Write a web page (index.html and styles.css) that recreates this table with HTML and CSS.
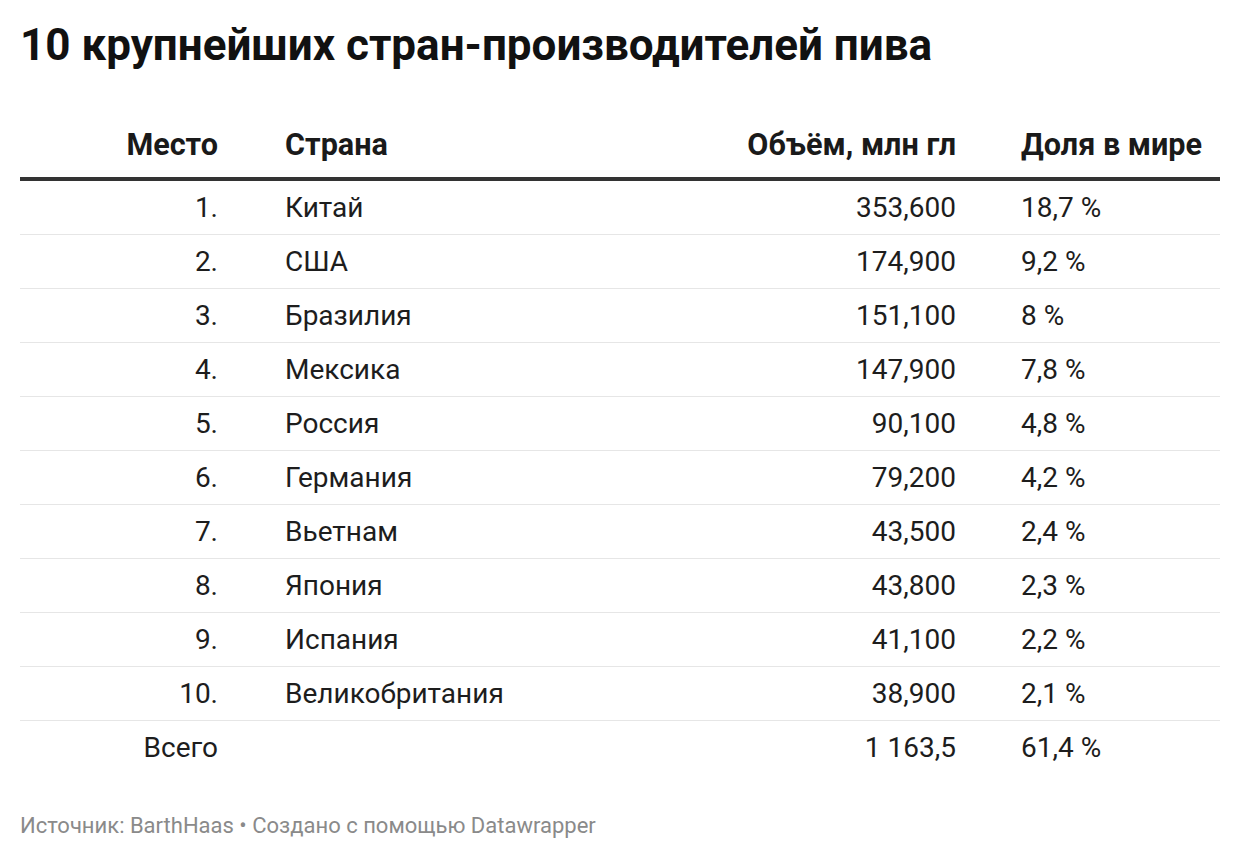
FILE: index.html
```html
<!DOCTYPE html>
<html lang="ru">
<head>
<meta charset="utf-8">
<title>10 крупнейших стран-производителей пива</title>
<link rel="stylesheet" href="styles.css">
</head>
<body>
<div class="page">
  <h1 class="title">10 крупнейших стран-производителей пива</h1>
  <div class="table">
    <div class="row head">
      <div class="c1">Место</div>
      <div class="c2">Страна</div>
      <div class="c3">Объём, млн гл</div>
      <div class="c4">Доля в мире</div>
    </div>
    <div class="row"><div class="c1">1.</div><div class="c2">Китай</div><div class="c3">353,600</div><div class="c4">18,7 %</div></div>
    <div class="row"><div class="c1">2.</div><div class="c2">США</div><div class="c3">174,900</div><div class="c4">9,2 %</div></div>
    <div class="row"><div class="c1">3.</div><div class="c2">Бразилия</div><div class="c3">151,100</div><div class="c4">8 %</div></div>
    <div class="row"><div class="c1">4.</div><div class="c2">Мексика</div><div class="c3">147,900</div><div class="c4">7,8 %</div></div>
    <div class="row"><div class="c1">5.</div><div class="c2">Россия</div><div class="c3">90,100</div><div class="c4">4,8 %</div></div>
    <div class="row"><div class="c1">6.</div><div class="c2">Германия</div><div class="c3">79,200</div><div class="c4">4,2 %</div></div>
    <div class="row"><div class="c1">7.</div><div class="c2">Вьетнам</div><div class="c3">43,500</div><div class="c4">2,4 %</div></div>
    <div class="row"><div class="c1">8.</div><div class="c2">Япония</div><div class="c3">43,800</div><div class="c4">2,3 %</div></div>
    <div class="row"><div class="c1">9.</div><div class="c2">Испания</div><div class="c3">41,100</div><div class="c4">2,2 %</div></div>
    <div class="row"><div class="c1">10.</div><div class="c2">Великобритания</div><div class="c3">38,900</div><div class="c4">2,1 %</div></div>
    <div class="row last"><div class="c1">Всего</div><div class="c2"></div><div class="c3">1 163,5</div><div class="c4">61,4 %</div></div>
  </div>
  <div class="footer">Источник: BarthHaas • Создано с помощью Datawrapper</div>
</div>
</body>
</html>
```

FILE: styles.css
```css
html, body {
  margin: 0;
  padding: 0;
  background: #ffffff;
}
body {
  font-family: Roboto, "Noto Sans", "Liberation Sans", sans-serif;
  color: #1d1d1d;
}
.page {
  padding: 19px 20px 0 20px;
  width: 1200px;
}
.title {
  margin: 0;
  font-size: 44px;
  line-height: 52px;
  font-weight: 700;
  color: #111111;
}
.table {
  margin-top: 58px;
  width: 1200px;
}
.row {
  display: grid;
  grid-template-columns: 265px 335px 336px 264px;
  font-size: 28px;
  line-height: 32px;
  padding: 11px 0 10px 0;
  border-bottom: 1px solid #e6e6e6;
}
.row.head {
  padding: 0 0 16px 0;
  border-bottom: 4px solid #333333;
  font-size: 30.6px;
  font-weight: 700;
  color: #1a1a1a;
}
.row.last {
  border-bottom: none;
}
.c1 {
  text-align: right;
  padding-right: 67px;
}
.c2 {
  text-align: left;
}
.c3 {
  text-align: right;
}
.c4 {
  text-align: left;
  padding-left: 65px;
}
.footer {
  margin-top: 40px;
  font-size: 22px;
  line-height: 24px;
  color: #8a8a8a;
}
```
